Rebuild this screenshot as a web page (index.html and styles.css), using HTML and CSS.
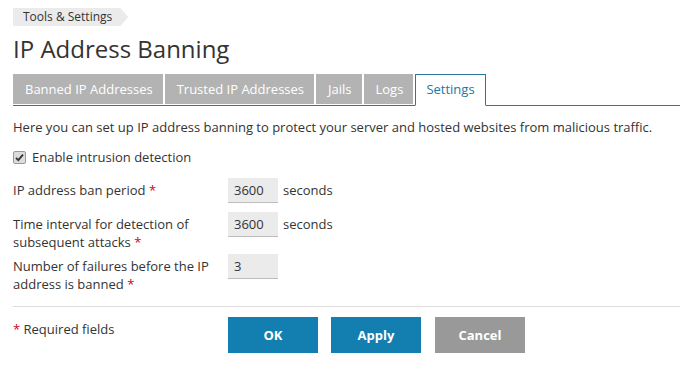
FILE: index.html
```html
<!doctype html>
<html lang="en">
	<head>
		<meta charset="UTF-8" />
		<meta name="viewport" content="width=device-width, initial-scale=1.0" />
		<title>IP Address Banning</title>
		<link rel="stylesheet" href="styles.css">
	</head>
	<body>
		<div class="page">
			<div class="breadcrumb"><span>Tools &amp; Settings</span></div>
			<h1>IP Address Banning</h1>

			<ul class="tabs">
				<li>Banned IP Addresses</li>
				<li>Trusted IP Addresses</li>
				<li>Jails</li>
				<li>Logs</li>
				<li class="active">Settings</li>
			</ul>

			<p class="intro">Here you can set up IP address banning to protect your server and hosted websites from malicious traffic.</p>

			<form id="banForm">
				<label class="check">
					<span class="check-box">
						<svg width="13" height="13" viewBox="0 0 13 13">
							<rect x="0.5" y="0.5" width="12" height="12" rx="1.5" fill="#dcdcdc" stroke="#9a9a9a"/>
							<path d="M3 6.8 L5.3 9.2 L10 3.6" fill="none" stroke="#333" stroke-width="1.8"/>
						</svg>
					</span>
					Enable intrusion detection
				</label>

				<div class="form-row">
					<label class="field-label" for="banPeriod">IP address ban period <span class="req">*</span></label>
					<input type="text" id="banPeriod" value="3600">
					<span class="unit">seconds</span>
				</div>

				<div class="form-row">
					<label class="field-label" for="interval">Time interval for detection of subsequent attacks <span class="req">*</span></label>
					<input type="text" id="interval" value="3600">
					<span class="unit">seconds</span>
				</div>

				<div class="form-row">
					<label class="field-label" for="failures">Number of failures before the IP address is banned <span class="req">*</span></label>
					<input type="text" id="failures" value="3">
				</div>

				<div class="actions">
					<div class="required"><span class="req">*</span> Required fields</div>
					<button type="submit" class="btn primary">OK</button>
					<button type="button" class="btn primary">Apply</button>
					<button type="button" class="btn cancel">Cancel</button>
				</div>
			</form>
		</div>
	</body>
</html>
```

FILE: styles.css
```css
body {
	margin: 0;
	font-family: 'Open Sans', Arial, sans-serif;
	font-size: 13px;
	color: #333;
	background: #fff;
}
.page {
	width: 667px;
	padding: 8px 0 0 13px;
}
.breadcrumb {
	display: flex;
}
.breadcrumb span {
	display: block;
	height: 18px;
	line-height: 18px;
	padding: 0 16px 0 10px;
	font-size: 12px;
	background: #ebebeb;
	clip-path: polygon(0 0, calc(100% - 8px) 0, 100% 50%, calc(100% - 8px) 100%, 0 100%);
}
h1 {
	margin: 8px 0 10px;
	font-size: 24px;
	font-weight: normal;
	line-height: 30px;
	color: #333;
}
.tabs {
	display: flex;
	gap: 2px;
	margin: 0;
	padding: 0;
	list-style: none;
	border-bottom: 1px solid #2878a4;
}
.tabs li {
	height: 30px;
	line-height: 30px;
	padding: 0 10px 0 12px;
	background: #b3b3b3;
	color: #fff;
	font-size: 13px;
}
.tabs li.active {
	height: 30px;
	margin-bottom: -1px;
	padding: 0 10px;
	background: #fff;
	color: #2277a5;
	border: 1px solid #2878a4;
	border-bottom: 1px solid #fff;
	line-height: 29px;
}
.intro {
	margin: 12px 0 12px;
	line-height: 18px;
}
.check {
	display: flex;
	align-items: center;
	gap: 6px;
	height: 18px;
	margin-bottom: 12px;
}
.check-box {
	display: flex;
}
.form-row {
	display: flex;
	align-items: flex-start;
	margin-bottom: 9px;
}
.field-label {
	width: 215px;
	padding-top: 3px;
	margin-bottom: -6px;
	line-height: 18px;
	padding-right: 8px;
	box-sizing: border-box;
}
.req {
	color: #d0021b;
}
input[type="text"] {
	width: 50px;
	height: 25px;
	padding: 0 6px;
	border: none;
	border-bottom: 1px solid #bcbcbc;
	background: #ebebeb;
	font-family: inherit;
	font-size: 13px;
	color: #333;
	box-sizing: border-box;
}
.unit {
	margin-left: 5px;
	line-height: 25px;
}
.actions {
	display: flex;
	align-items: flex-start;
	margin-top: 19px;
	padding-top: 10px;
	border-top: 1px solid #dddddd;
}
.required {
	width: 215px;
	padding-top: 3px;
	line-height: 18px;
}
.btn {
	width: 90px;
	height: 36px;
	margin-right: 13px;
	border: none;
	color: #fff;
	font-family: inherit;
	font-size: 13px;
	font-weight: bold;
	cursor: pointer;
}
.btn.primary {
	background: #127fb0;
}
.btn.cancel {
	margin-left: 1px;
	background: #999999;
}
```
